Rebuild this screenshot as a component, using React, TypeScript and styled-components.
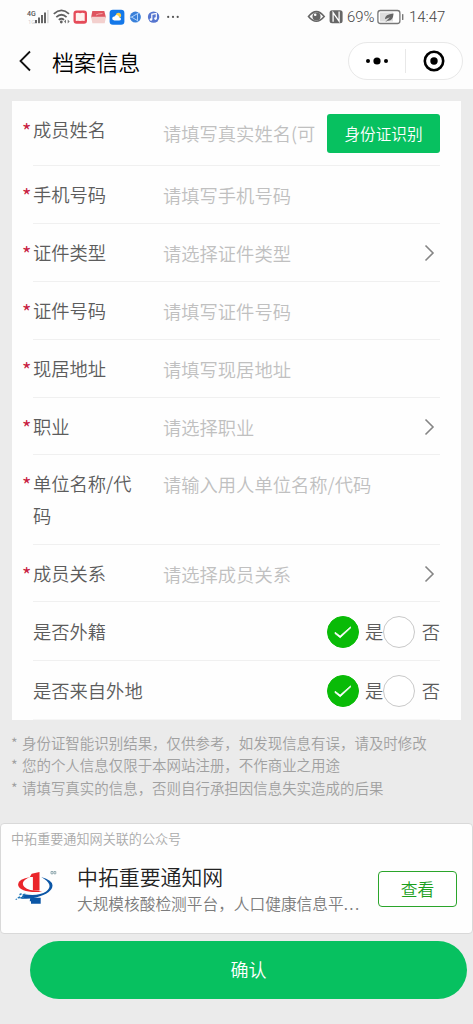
import React from "react";
import styled, { createGlobalStyle } from "styled-components";

const GlobalStyle = createGlobalStyle`
  * { box-sizing: border-box; }
  body {
    margin: 0;
    background: #ebebeb;
    font-family: "Noto Sans CJK SC", "Liberation Sans", sans-serif;
    font-weight: 350;
    color: #5c5c5c;
  }
  button { font: inherit; padding: 0; margin: 0; cursor: pointer; }
  svg { display: block; flex: none; }
`;

const Page = styled.div`
  display: flex;
  flex-direction: column;
  width: 473px;
  height: 1024px;
  overflow: hidden;
  background: #ebebeb;
`;

const Header = styled.header`
  height: 89px;
  flex: none;
  background: #fdfdfd;
`;

const StatusBar = styled.div`
  display: flex;
  justify-content: space-between;
  align-items: center;
  height: 33px;
  padding: 0 27px 0 26px;
`;

const StatusGroup = styled.div`
  display: flex;
  align-items: center;
`;

const StatusText = styled.span<{ $width: number; $gap?: number }>`
  width: ${(p) => p.$width}px;
  margin-left: ${(p) => p.$gap ?? 0}px;
  font: 300 14.9px/20px "Roboto", sans-serif;
  color: #444;
  white-space: nowrap;
`;

const NavBar = styled.div`
  display: flex;
  align-items: center;
  height: 56px;
  padding: 0 10px 0 18px;
`;

const Title = styled.h1`
  flex: 1;
  margin: -1px 0 0 18px;
  font-size: 22.1px;
  line-height: 32px;
  font-weight: 350;
  color: #000;
`;

const Capsule = styled.div`
  display: flex;
  align-items: center;
  width: 115px;
  height: 38px;
  border: 1px solid #e8e8e8;
  border-radius: 19px;
  background: #fff;
`;

const CapsuleButton = styled.button`
  display: flex;
  flex: 1;
  align-items: center;
  justify-content: center;
  height: 24px;
  border: 0;
  background: none;
  & + & {
    padding-left: 1px;
    border-left: 1px solid #e8e8e8;
  }
`;

const FormCard = styled.section`
  flex: none;
  width: 449px;
  margin: 12px 0 0 12px;
  padding: 0 21px;
  background: #fefefe;
`;

const Row = styled.div<{ $height: number; $top?: number }>`
  display: flex;
  align-items: flex-start;
  height: ${(p) => p.$height}px;
  padding-top: ${(p) => p.$top ?? 12}px;
  border-bottom: 1px solid #f0f0f0;

  &:last-child { border-bottom-color: #f6f6f6; }
`;

const Label = styled.div<{ $wide?: boolean }>`
  flex: none;
  width: ${(p) => (p.$wide ? 150 : 108)}px;
  font-size: 18.3px;
  line-height: 32px;
`;

const Star = styled.span`
  flex: none;
  width: 11px;
  margin-left: -11px;
  padding-top: 2px;
  font-size: 20px;
  line-height: 32px;
  font-weight: 400;
  color: #c8203f;
`;

const Placeholder = styled.span<{ $down?: number }>`
  flex: 1;
  margin: ${(p) => p.$down ?? 1}px 0 0 22px;
  overflow: hidden;
  font-size: 18.3px;
  line-height: 32px;
  color: #c0c0c0;
  white-space: nowrap;
`;

const ScanButton = styled.button`
  width: 113px;
  height: 39px;
  margin-top: 1px;
  padding-bottom: 1px;
  border: 0;
  border-radius: 3px;
  background: #07c160;
  color: #fff;
  font-size: 15.6px;
`;

const ArrowSlot = styled.div`
  padding: 8px 5px 0 0;
`;

const Choices = styled.div`
  display: flex;
  align-items: center;
  margin: 1px 0 0 auto;
`;

const Radio = styled.span<{ $on?: boolean }>`
  display: flex;
  align-items: center;
  justify-content: center;
  width: 32px;
  height: 32px;
  border: 1px solid ${(p) => (p.$on ? "#09bb07" : "#c9c9c9")};
  border-radius: 50%;
  background: ${(p) => (p.$on ? "#09bb07" : "#fff")};
`;

const ChoiceText = styled.span<{ $gap: number }>`
  margin-left: ${(p) => p.$gap}px;
  font-size: 18.3px;
  line-height: 30px;
  padding-bottom: 2px;
`;

const Notes = styled.div`
  height: 103px;
  flex: none;
  padding: 11.5px 0 0 11px;
  font-size: 14.46px;
  line-height: 22.7px;
  color: #a0a0a0;
  white-space: nowrap;
`;

const Note = styled.div`
  display: flex;
`;

const NoteMark = styled.span`
  width: 11px;
`;

const AccountCard = styled.section`
  flex: none;
  height: 111px;
  padding: 4px 15px 0 10px;
  border: 1px solid #d9d9d9;
  border-radius: 4px;
  background: #fefefe;
`;

const AccountCaption = styled.div`
  font-size: 13.1px;
  line-height: 22px;
  color: #aaa;
`;

const AccountBody = styled.div`
  display: flex;
  align-items: center;
  height: 77px;
`;

const AccountText = styled.div`
  width: 287px;
  margin: -1px auto 0 15px;
  white-space: nowrap;
`;

const AccountName = styled.div`
  font-size: 20.9px;
  line-height: 30px;
  color: #222;
`;

const AccountDescription = styled.div`
  font-size: 15.7px;
  line-height: 25px;
  color: #7c7c7c;
`;

const Ellipsis = styled.span`
  letter-spacing: 1.4px;
`;

const ViewButton = styled.button`
  width: 79px;
  height: 36px;
  border: 1.5px solid #2ba52b;
  border-radius: 4px;
  background: #fff;
  color: #1c9f1c;
  font-size: 16.8px;
`;

const ConfirmButton = styled.button`
  flex: none;
  width: 437px;
  height: 58px;
  margin: 7px 0 0 30px;
  padding-bottom: 2px;
  border: 0;
  border-radius: 29px;
  background: #07c160;
  color: #fff;
  font-size: 18px;
`;

const LeftStatusIcons = () => (
  <svg width="156" height="20" viewBox="26 6.5 156 20">
    <text x="27" y="15.5" fontFamily="Roboto" fontSize="7" fontWeight="500" fill="#555">4G</text>
    <text x="28" y="23" fontFamily="Roboto" fontSize="6" fill="#bbb">1G</text>
    <g fill="#666">
      <rect x="35" y="19.5" width="2" height="3.2" />
      <rect x="38" y="17" width="2" height="5.7" />
      <rect x="41" y="14.5" width="2" height="8.2" />
      <rect x="44" y="12" width="2" height="10.7" />
      <rect x="47" y="9.5" width="1.7" height="13.2" fill="#ddd" />
    </g>
    <g fill="none" stroke="#606060" strokeWidth="1.8">
      <path d="M53.8 13.3Q61.5 6.5 69 13.3" />
      <path d="M56.3 16.6Q61.5 12 66.6 16.6" />
      <path d="M58.8 19.4Q61.5 17.2 64 19.4" />
    </g>
    <circle cx="61.3" cy="21.5" r="1.4" fill="#606060" />
    <path d="M64 21l2-2v4zm5.7 0-2-2v4z" fill="#777" />
    <rect x="73.5" y="10" width="13.5" height="13.3" rx="3" fill="#e54b59" />
    <path d="M75.8 12.7q2.1-.8 4.3 0 2.1-.8 4.6 0v7.9q-2.4-.7-4.6 0-2.1-.7-4.3 0z" fill="#fff2ef" />
    <path d="M92.3 10.5h12l1.8 7H91z" fill="#df5560" />
    <path d="M91 16.2h15l-1.3 6.6H92.4z" fill="#f3d0ce" />
    <path d="m96 14.5 2.5-1 4-.5" stroke="#f4a7a8" strokeWidth="1" fill="none" />
    <rect x="109.6" y="9.2" width="14.8" height="15" rx="3.3" fill="#1478e9" />
    <circle cx="118.5" cy="14.8" r="2.6" fill="#ffd149" />
    <path d="M114.3 20q-2.3-.2-2.1-2.2.2-1.9 2.3-1.7.8-2.3 3-1.4 1.7.6 1.5 2.2 2-.1 2 1.5 0 1.6-2 1.6z" fill="#fff" />
    <circle cx="135.4" cy="16.6" r="5.5" fill="#3980d9" />
    <path d="m131.5 16.6 6-3.5v7zM137.5 13l2-1M137.5 20l1 1.4M131.5 16.6h-1.7" fill="none" stroke="#bddbff" strokeWidth=".9" />
    <circle cx="153.6" cy="16.6" r="5.7" fill="#5675cf" />
    <path d="M151.8 18.8v-5l4.5-.8v5" fill="none" stroke="#fff" strokeWidth="1.2" />
    <circle cx="151" cy="19" r="1.3" fill="#fff" />
    <circle cx="155.5" cy="18.1" r="1.3" fill="#fff" />
    <g fill="#555"><circle cx="168.2" cy="16.4" r="1.1" /><circle cx="173" cy="16.4" r="1.1" /><circle cx="177.7" cy="16.4" r="1.1" /></g>
  </svg>
);

const EyeNfcIcons = () => (
  <svg width="36" height="18" viewBox="307 8 36 18">
    <path d="M308.5 16.5Q316.3 6.8 324.2 16.5 316.3 26 308.5 16.5Z" fill="none" stroke="#666" strokeWidth="1.6" />
    <circle cx="316.5" cy="16.5" r="4" fill="#666" />
    <circle cx="315.2" cy="14.8" r="1.3" fill="#fff" />
    <rect x="329.6" y="10.2" width="13" height="13" rx="2.5" fill="#666" />
    <path d="M333.1 21.8v-9.2l6 8.5v-9.6" fill="none" stroke="#fff" strokeWidth="1.3" />
  </svg>
);

const BatteryIcon = () => (
  <svg width="28" height="16" viewBox="377 8.5 28 16">
    <rect x="377.9" y="10" width="22" height="13" rx="2.5" fill="#fff" stroke="#777" strokeWidth="1.3" />
    <rect x="380" y="12" width="13" height="9" fill="#ddd" />
    <path d="M385 18.8q-.4-5 8.6-5.8-.6 7.8-6 7.2l-2.5 1.5 4.8-5z" fill="#666" />
    <rect x="402" y="13.5" width="1.4" height="6" rx=".5" fill="#777" />
  </svg>
);

const BackIcon = () => (
  <svg width="16" height="24" viewBox="0 0 16 24">
    <path d="M12 2.5 2.5 12l9.5 9.5" fill="none" stroke="#111" strokeWidth="1.8" />
  </svg>
);

const MoreIcon = () => (
  <svg width="24" height="10" viewBox="0 0 24 10">
    <circle cx="3" cy="5" r="2" /><circle cx="12" cy="5" r="3.6" /><circle cx="21" cy="5" r="2" />
  </svg>
);

const TargetIcon = () => (
  <svg width="22" height="22" viewBox="0 0 22 22">
    <circle cx="11" cy="11" r="9.2" fill="none" stroke="#000" strokeWidth="2.6" />
    <circle cx="11" cy="11" r="3.7" />
  </svg>
);

const ArrowIcon = () => (
  <svg width="11" height="18" viewBox="0 0 11 18">
    <path d="m1.5 1.5 7.5 7.5-7.5 7.5" fill="none" stroke="#858585" strokeWidth="1.6" />
  </svg>
);

const CheckIcon = () => (
  <svg width="18" height="14" viewBox="0 0 18 14">
    <path d="m1.2 7.3 4.9 3.8L16.4 2l.6.6L6.2 12.8.9 8.5z" fill="#fff" stroke="#fff" strokeWidth=".8" />
  </svg>
);

const AccountLogo = () => (
  <svg width="51" height="44" viewBox="12 867 51 44">
    <path d="M31.4 877q-12 2-12.3 7.2-.1 6.3 14 7.8 6 .4 10-1.1-13.5.4-17.6-3.8-5.2-5.8 5.9-10.1Z" fill="#ea252b" />
    <path d="M32.7 873.7 40.5 872v18.4h-6.6v-13.5h-3.1Z" fill="#ea252b" />
    <path d="M42.2 877.1q11.3 3.5 11.3 8.2 0 7.7-16.5 12.2-9 2.4-17.1.5 3.4-.8 5.1-3.8 14.7 2.2 22.1-2.7 8.8-6.6-4.9-14.4Z" fill="#0b56a6" />
    <path d="M31.3 897.8h10.4v6H32v-2.5h-1.3Z" fill="#0b56a6" />
    <path d="m20.2 894 2.1-1 .5 1.5-2 1zm3.6.1 2.7-.5-.8 2-2.3.2zm-5.3 3.2 2.4-1 .5 1.7-2.3.5zm4.2-.4 2.7-.5-.9 2h-2.4zM16.5 899l1.6-.4v1.2h-1.6z" fill="#2379b8" />
    <path d="M52 871.5h2v2.3h-2zm3 0h1.8v2.3H55z" fill="none" stroke="#7d9aa2" strokeWidth=".8" />
  </svg>
);

type Field = {
  label: string;
  hint: string;
  height: number;
  arrow?: boolean;
  scan?: boolean;
};

const fields: Field[] = [
  { label: "成员姓名", hint: "请填写真实姓名(可", height: 65, scan: true },
  { label: "手机号码", hint: "请填写手机号码", height: 58 },
  { label: "证件类型", hint: "请选择证件类型", height: 58, arrow: true },
  { label: "证件号码", hint: "请填写证件号码", height: 58 },
  { label: "现居地址", hint: "请填写现居地址", height: 58 },
  { label: "职业", hint: "请选择职业", height: 57, arrow: true },
  { label: "单位名称/代码", hint: "请输入用人单位名称/代码", height: 90 },
  { label: "成员关系", hint: "请选择成员关系", height: 57, arrow: true },
];

const questions = [
  { label: "是否外籍", height: 59 },
  { label: "是否来自外地", height: 59 },
];

const notes = [
  "身份证智能识别结果，仅供参考，如发现信息有误，请及时修改",
  "您的个人信息仅限于本网站注册，不作商业之用途",
  "请填写真实的信息，否则自行承担因信息失实造成的后果",
];

export default function App() {
  return (
    <Page>
      <GlobalStyle />
      <Header>
        <StatusBar>
          <LeftStatusIcons />
          <StatusGroup>
            <EyeNfcIcons />
            <StatusText $width={30} $gap={4}>69%</StatusText>
            <BatteryIcon />
            <StatusText $width={37} $gap={4}>14:47</StatusText>
          </StatusGroup>
        </StatusBar>
        <NavBar>
          <BackIcon />
          <Title>档案信息</Title>
          <Capsule>
            <CapsuleButton aria-label="更多"><MoreIcon /></CapsuleButton>
            <CapsuleButton aria-label="关闭"><TargetIcon /></CapsuleButton>
          </Capsule>
        </NavBar>
      </Header>
      <FormCard>
        {fields.map((f) => (
          <Row key={f.label} $height={f.height}>
            <Star>*</Star>
            <Label>{f.label}</Label>
            <Placeholder $down={f.scan ? 4 : 1}>{f.hint}</Placeholder>
            {f.scan && <ScanButton>身份证识别</ScanButton>}
            {f.arrow && <ArrowSlot><ArrowIcon /></ArrowSlot>}
          </Row>
        ))}
        {questions.map((q) => (
          <Row key={q.label} $height={q.height} $top={13}>
            <Label $wide>{q.label}</Label>
            <Choices>
              <Radio $on><CheckIcon /></Radio>
              <ChoiceText $gap={6}>是</ChoiceText>
              <Radio />
              <ChoiceText $gap={6.4}>否</ChoiceText>
            </Choices>
          </Row>
        ))}
      </FormCard>
      <Notes>
        {notes.map((n) => (
          <Note key={n}><NoteMark>*</NoteMark>{n}</Note>
        ))}
      </Notes>
      <AccountCard>
        <AccountCaption>中拓重要通知网关联的公众号</AccountCaption>
        <AccountBody>
          <AccountLogo />
          <AccountText>
            <AccountName>中拓重要通知网</AccountName>
            <AccountDescription>
              大规模核酸检测平台，人口健康信息平<Ellipsis>...</Ellipsis>
            </AccountDescription>
          </AccountText>
          <ViewButton>查看</ViewButton>
        </AccountBody>
      </AccountCard>
      <ConfirmButton>确认</ConfirmButton>
    </Page>
  );
}
